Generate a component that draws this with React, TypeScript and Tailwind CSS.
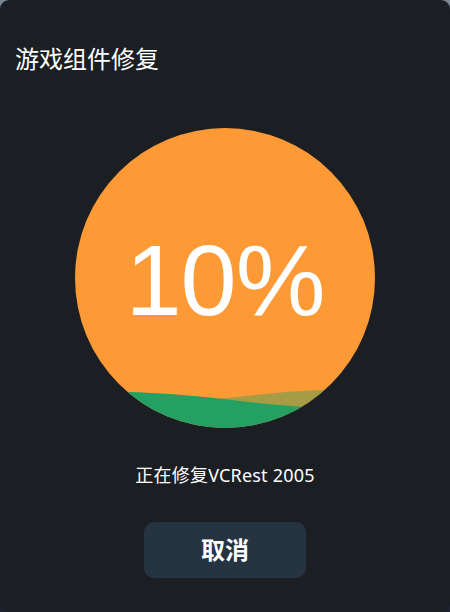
import React from 'react';

const Wave = () => (
  <svg className="absolute inset-0" width="300" height="300" viewBox="0 0 300 300">
    <path d="M0 276 C 70 280, 130 272, 190 266 S 270 262, 300 264 L300 300 L0 300 Z" fill="#23a062" fillOpacity="0.4" />
    <path d="M0 264 C 60 262, 115 267, 165 273 S 255 281, 300 284 L300 300 L0 300 Z" fill="#23a062" />
  </svg>
);

export default function App() {
  const progress = 10;

  return (
    <div className="w-[450px] h-[612px] bg-linear-to-b from-[#7d8794] to-[#1d2333]">
      <div
        className="w-full h-full rounded-[9px] bg-[#1b1e23] flex flex-col items-center text-white"
        style={{ fontFamily: '"Noto Sans", "Noto Sans CJK SC", sans-serif' }}
      >
        {/* Header */}
        <div className="w-full px-[15px] pt-[43px] text-[24px] leading-[32px]">游戏组件修复</div>

        {/* Progress circle */}
        <div className="relative mt-[53px] w-[300px] h-[300px] rounded-full overflow-hidden bg-[#fd9a35]">
          <Wave />
          <div className="absolute inset-0 flex items-center justify-center pt-[4px]">
            <span
              className="text-[101px] leading-none tracking-[-1px] text-white"
              style={{ fontFamily: '"Liberation Sans", sans-serif' }}
            >
              {progress}%
            </span>
          </div>
        </div>

        <div className="mt-[35px] text-[18px] leading-[24px] tracking-[0.2px]">正在修复VCRest 2005</div>

        <button className="mt-[35px] w-[162px] h-[56px] rounded-[10px] bg-[#263442] text-[24px] font-bold text-white">
          取消
        </button>
      </div>
    </div>
  );
}
